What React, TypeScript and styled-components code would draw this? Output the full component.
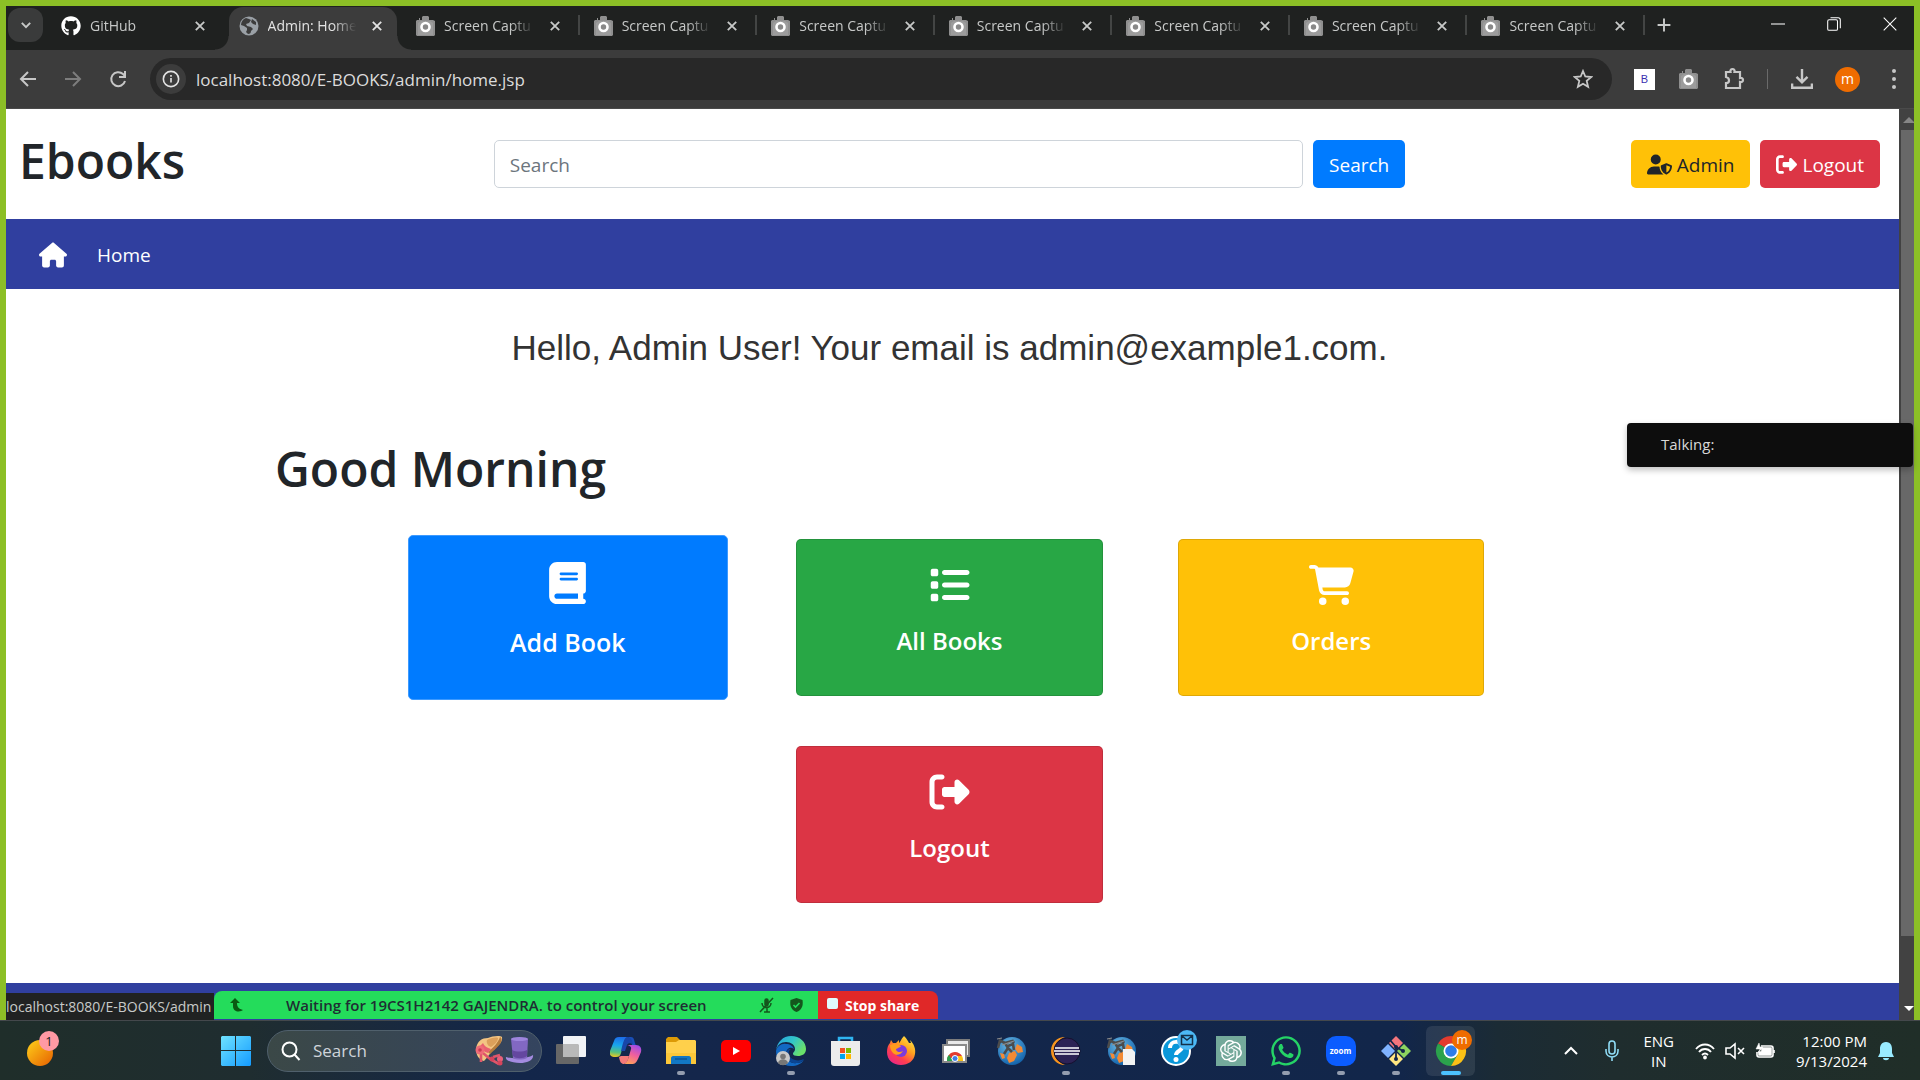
import React from 'react';
import styled, { createGlobalStyle, css } from 'styled-components';
import { FaGithub, FaWhatsapp } from 'react-icons/fa';
import {
  FaHouse, FaBook, FaList, FaCartShopping, FaRightFromBracket, FaUserShield,
} from 'react-icons/fa6';
import { SiOpenai } from 'react-icons/si';

const ui = `'Open Sans', 'Noto Sans', sans-serif`;

const Global = createGlobalStyle`
  *, *::before, *::after { box-sizing: border-box; }
  body { margin: 0; font-family: ${ui}; background: #fff; }
  button, input { font-family: inherit; }
  button { cursor: pointer; }
  svg { display: block; flex: none; }
`;

const Desktop = styled.div`
  min-height: 100vh;
  display: flex;
  flex-direction: column;
  overflow: hidden;
`;

const Browser = styled.div`
  position: relative;
  flex: 1;
  display: flex;
  flex-direction: column;
`;

const ShareFrame = styled.div`
  position: absolute;
  inset: 0;
  border: 6px solid #8cbf26;
  border-bottom: 0;
  pointer-events: none;
`;

/* ---------- tab strip ---------- */

const TabStrip = styled.div`
  height: 50px;
  padding: 6px 6px 0 8px;
  background: #1f2120;
  display: flex;
  color: #c7c9c8;
`;

const PlainButton = styled.button`
  border: 0;
  padding: 0;
  background: none;
  color: inherit;
  display: flex;
  align-items: center;
  justify-content: center;
`;

const TabSearch = styled(PlainButton)`
  width: 35px;
  height: 34px;
  margin: 2px 3px 0 0;
  border-radius: 12px;
  background: #3a3b3b;
`;

const Tabs = styled.div`
  flex: 1;
  display: grid;
  grid-template-columns: repeat(9, minmax(0, 1fr));
`;

const flare = css`
  content: '';
  position: absolute;
  bottom: 0;
  width: 14px;
  height: 14px;
`;

const Tab = styled.div<{ $active?: boolean; $divider?: boolean }>`
  position: relative;
  margin: 1px 4px 0 5px;
  padding: 0 10px 6px;
  display: flex;
  align-items: center;
  gap: 9px;
  border-radius: 14px 14px 0 0;
  background: ${(p) => (p.$active ? '#3c3c3c' : 'transparent')};
  color: ${(p) => (p.$active ? '#e3e3e3' : '#c7c9c8')};
  ${(p) => p.$active && css`
    &::before {
      ${flare}
      left: -14px;
      background: radial-gradient(circle at 0 0, transparent 13px, #3c3c3c 14px);
    }
    &::after {
      ${flare}
      right: -14px;
      background: radial-gradient(circle at 100% 0, transparent 13px, #3c3c3c 14px);
    }
  `}
  ${(p) => p.$divider && css`
    &::after {
      content: '';
      position: absolute;
      right: -5px;
      top: 8px;
      width: 2px;
      height: 20px;
      background: #434544;
    }
  `}
`;

const TabTitle = styled(PlainButton)`
  flex: 1;
  min-width: 0;
  white-space: nowrap;
  justify-content: flex-start;
  font-size: 14px;
  line-height: 20px;
  mask-image: linear-gradient(90deg, #000 72%, transparent 98%);
`;

const TabClose = styled(PlainButton)`
  width: 20px;
  height: 20px;
`;

const NewTab = styled(PlainButton)`
  width: 40px;
  height: 38px;
`;

const WindowControls = styled.div`
  width: 230px;
  padding-left: 66px;
  display: flex;
  color: #fff;
  button { flex: none; width: 56px; height: 36px; }
`;

/* ---------- toolbar ---------- */

const Toolbar = styled.div`
  height: 59px;
  padding: 0 15px 0 16px;
  background: #3c3c3c;
  border-bottom: 1px solid #4a4a4a;
  display: flex;
  align-items: center;
  color: #c7c7c7;
`;

const NavButtons = styled.div`
  display: flex;
  gap: 22px;
  margin-right: 21px;
`;

const ToolButton = styled(PlainButton)<{ $dim?: boolean }>`
  width: 23px;
  height: 24px;
  color: ${(p) => (p.$dim ? '#7d7d7d' : '#c7c7c7')};
`;

const Omnibox = styled.div`
  flex: 1;
  height: 42px;
  padding: 0 18px 0 6px;
  border-radius: 21px;
  background: #282828;
  display: flex;
  align-items: center;
  gap: 10px;
`;

const SiteInfo = styled(PlainButton)`
  width: 30px;
  height: 30px;
  border-radius: 50%;
  background: #3c3c3c;
  color: #e3e3e3;
`;

const Address = styled.input`
  flex: 1;
  min-width: 0;
  border: 0;
  padding: 1px 0 0;
  outline: 0;
  background: none;
  color: #dcdcdc;
  font-size: 17px;
  line-height: 24px;
`;

const Extensions = styled.div`
  display: flex;
  align-items: center;
  gap: 22px;
  margin-left: 22px;
`;

const ExtBadge = styled(PlainButton)`
  width: 21px;
  height: 21px;
  background: #fff;
  color: #3a2fb0;
  font: 11px/20px 'Liberation Sans', sans-serif;
`;

const ToolDivider = styled.div`
  width: 1px;
  height: 20px;
  background: #6a6a6a;
`;

const Avatar = styled(PlainButton)`
  width: 25px;
  height: 25px;
  border-radius: 50%;
  background: #ef6c00;
  color: #fff;
  font-size: 14px;
  line-height: 16px;
`;

/* ---------- page ---------- */

const Viewport = styled.div`
  flex: 1;
  display: flex;
  padding-right: 6px;
`;

const Page = styled.div`
  flex: 1;
  min-width: 0;
  display: flex;
  flex-direction: column;
  background: #fff;
  color: #212529;
`;

const Header = styled.header`
  height: 110px;
  display: grid;
  grid-template-columns: 1fr 2fr 1fr;
  > * { padding: 0 19px; }
`;

const Brand = styled.h1`
  margin: 0;
  padding-top: 22px;
  font-size: 48px;
  line-height: 60px;
  font-weight: 600;
`;

const SearchForm = styled.form`
  display: flex;
  align-items: center;
  gap: 10px;
`;

const SearchInput = styled.input`
  flex: 1;
  min-width: 0;
  height: 48px;
  padding: 2px 15px 0;
  border: 1px solid #ced4da;
  border-radius: 5px;
  color: #495057;
  font-size: 19px;
  line-height: 30px;
  &::placeholder { color: #6c757d; opacity: 1; }
`;

const tones = {
  primary: ['#007bff', '#fff'],
  warning: ['#ffc107', '#212529'],
  danger: ['#dc3545', '#fff'],
};

const buttonLook = css<{ $tone: keyof typeof tones }>`
  height: 48px;
  padding: 1px 16px 0;
  border: 0;
  border-radius: 5px;
  display: flex;
  align-items: center;
  gap: 5px;
  text-decoration: none;
  font-size: 19px;
  line-height: 30px;
  background: ${(p) => tones[p.$tone][0]};
  color: ${(p) => tones[p.$tone][1]};
`;

const Button = styled.button`${buttonLook}`;
const ButtonLink = styled.a`${buttonLook}`;

const Account = styled.div`
  display: flex;
  align-items: center;
  justify-content: flex-end;
  gap: 10px;
`;

const Nav = styled.nav`
  height: 70px;
  padding: 2px 0 0 39px;
  background: #303f9f;
  display: flex;
  align-items: center;
  gap: 30px;
  a { color: #fff; font-size: 19px; line-height: 30px; text-decoration: none; }
`;

const Main = styled.main`
  flex: 1;
`;

const Hello = styled.p`
  margin: 0;
  padding-top: 38px;
  text-align: center;
  font: 35px/42px 'Liberation Sans', Arial, sans-serif;
  color: #333;
`;

const Container = styled.section`
  max-width: 1425px;
  margin: 70px auto 0;
  padding: 0 38px;
`;

const Greeting = styled.h2`
  margin: 0;
  font-size: 48px;
  line-height: 60px;
  font-weight: 600;
`;

const Cards = styled.div`
  max-width: 1070px;
  margin: 40px auto 80px;
  display: grid;
  grid-template-columns: repeat(3, 1fr);
  gap: 50px 75px;
`;

const Card = styled.a<{ $color: string; $raised?: boolean; $center?: boolean }>`
  height: 157px;
  padding-top: 25px;
  border: 1px solid rgba(0, 0, 0, 0.125);
  border-radius: 5px;
  background: ${(p) => p.$color};
  background-clip: border-box;
  color: #fff;
  text-decoration: none;
  display: flex;
  flex-direction: column;
  align-items: center;
  gap: 21px;
  font-size: 24px;
  line-height: 30px;
  font-weight: 600;
  grid-column: ${(p) => (p.$center ? 2 : 'auto')};
  svg { width: 45px; height: 40px; }
  ${(p) => p.$raised && css`
    height: 165px;
    margin: -4px -7px;
    padding-top: 26px;
    border-color: #3d9aff;
    font-size: 25px;
    gap: 23px;
    svg { height: 42px; }
  `}
`;

const Footer = styled.footer`
  height: 37px;
  background: #303f9f;
`;

const Scrollbar = styled.div`
  width: 15px;
  background: #424242;
  display: flex;
  flex-direction: column;
  align-items: flex-end;
  justify-content: space-between;
  padding-bottom: 6px;
  overflow: hidden;
`;

const Thumb = styled.div`
  width: 13px;
  flex: 1;
  margin-bottom: 68px;
  background: #686868;
`;

/* ---------- floating windows ---------- */

const StatusBubble = styled.div`
  position: absolute;
  left: 6px;
  bottom: 0;
  width: 208px;
  height: 27px;
  background: #202222;
  color: #c8cac9;
  font-size: 14px;
  line-height: 28px;
  white-space: nowrap;
`;

const ShareBar = styled.div`
  position: absolute;
  left: 214px;
  bottom: 1px;
  width: 724px;
  height: 28px;
  display: flex;
  border-radius: 8px 8px 0 0;
  overflow: hidden;
  font-size: 15px;
  line-height: 28px;
  font-weight: 600;
`;

const ShareStatus = styled.div`
  flex: 1;
  display: flex;
  align-items: center;
  padding: 0 14px 0 16px;
  background: #24dc5b;
  color: #1f2d33;
  span { flex: 1; padding-left: 43px; white-space: nowrap; }
`;

const ShareIcons = styled.div`
  display: flex;
  gap: 14px;
`;

const StopShare = styled(PlainButton)`
  width: 120px;
  padding-left: 9px;
  justify-content: flex-start;
  gap: 7px;
  background: #e02828;
  color: #fff;
  font-size: 14px;
  font-weight: 700;
`;

const StopSquare = styled.i`
  width: 11px;
  height: 11px;
  margin-bottom: 4px;
  border-radius: 2px;
  background: #dffcff;
`;

const Toast = styled.div`
  position: absolute;
  right: 7px;
  top: 423px;
  width: 286px;
  height: 44px;
  padding-left: 34px;
  border-radius: 4px;
  background: #0d0d0d;
  box-shadow: 0 3px 6px rgba(0, 0, 0, 0.25);
  color: #d8d8d8;
  font-size: 15px;
  line-height: 43px;
`;

/* ---------- taskbar ---------- */

const Taskbar = styled.div`
  height: 60px;
  border-top: 1px solid #44484c;
  background: linear-gradient(90deg, #1f2e2a 0, #1f2d30 13%, #1c2b38 17%, #13264a 27%, #14264b 35%, #12264a 73%, #1b2b35 78%, #1f2d2e 84%, #202e28 100%);
  display: flex;
  align-items: center;
  color: #fff;
`;

const Widgets = styled(PlainButton)`
  width: 208px;
  height: 60px;
  padding: 0 0 4px 25px;
  justify-content: flex-start;
`;

const TaskSearch = styled.label`
  width: 275px;
  height: 42px;
  margin: 0 1px 0 4px;
  padding: 0 7px 0 13px;
  border: 1px solid #50606c;
  border-radius: 21px;
  background: linear-gradient(90deg, #3b4847, #34445f);
  display: flex;
  align-items: center;
  gap: 12px;
  input {
    flex: 1;
    min-width: 0;
    border: 0;
    padding: 0;
    background: none;
    color: #fff;
    font-size: 17px;
    line-height: 24px;
    &::placeholder { color: #cfd4da; opacity: 1; }
  }
`;

const Apps = styled.div`
  display: flex;
  align-items: center;
`;

const AppButton = styled(PlainButton)<{ $state?: 'running' | 'active' }>`
  position: relative;
  width: 55px;
  height: 50px;
  &::before {
    content: '';
    position: absolute;
    inset: 0 3px;
    border-radius: 6px;
    background: ${(p) => (p.$state === 'active' ? 'rgba(255,255,255,.09)' : 'none')};
  }
  &::after {
    content: '';
    position: absolute;
    bottom: 1px;
    width: ${(p) => (p.$state === 'active' ? '20px' : p.$state ? '8px' : '0')};
    height: 4px;
    border-radius: 2px;
    background: ${(p) => (p.$state === 'active' ? '#4cc2ff' : '#949daf')};
  }
  svg { position: relative; }
`;

const Tray = styled.div`
  margin-left: auto;
  padding-right: 24px;
  display: flex;
  align-items: center;
  gap: 21px;
`;

const TrayButton = styled(PlainButton)<{ $gap?: number; $align?: string }>`
  gap: ${(p) => p.$gap ?? 0}px;
  font-size: 15px;
  line-height: 20px;
  text-align: ${(p) => p.$align ?? 'center'};
`;

/* ---------- small icons ---------- */

type LineProps = { size?: number; w?: number; children: React.ReactNode };
const Line = ({ size = 20, w = 2, children }: LineProps) => (
  <svg width={size} height={size} viewBox="0 0 20 20" fill="none" stroke="currentColor" strokeWidth={w}>
    {children}
  </svg>
);

const Cross = () => <Line size={14} w={2}><path d="M4 4l12 12M16 4L4 16" strokeWidth="2.6" /></Line>;

const Camera = () => (
  <svg width="19" height="22" viewBox="0 0 19 22">
    <path d="M1 5h2V3h1v2h2V2l1-1h5l1 1v3h4l2 1v14l-1 1H1l-1-1V6z" fill="#8f8f8f" />
    <path d="M2 20V8l3-2h9l3 2v12z" fill="#9c9c9c" />
    <circle cx="9.500" cy="12" r="4" fill="#888" stroke="#fff" strokeWidth="2.600" />
  </svg>
);

const Globe = () => (
  <svg width="20" height="20" viewBox="0 0 20 20">
    <circle cx="10" cy="10" r="9.500" fill="#9aa0a6" />
    <path d="M7 2c-3 1-5 4-5 7l3 1 3 2v2l-1 2 2 2c2 0 3-1 3-3l2-2-2-2-4-1-1-2 3-1 2-3-2-1zM13 3l-1 3 2 2 3 1V6z" fill="#3c3c3c" />
  </svg>
);

const WeatherIcon = () => (
  <svg width="38" height="40" viewBox="0 0 38 40">
    <defs>
      <linearGradient id="sun" x1="0" y1="0" x2="1" y2="1">
        <stop offset="0" stopColor="#ffd21a" /><stop offset="1" stopColor="#e65f00" />
      </linearGradient>
    </defs>
    <circle cx="15" cy="24" r="13" fill="url(#sun)" />
    <circle cx="24" cy="12" r="10" fill="#ff99a4" />
    <text x="24" y="17" fontSize="13" fill="#222" textAnchor="middle">1</text>
  </svg>
);

const WindowsIcon = () => (
  <svg width="30" height="30" viewBox="0 0 30 30">
    <defs>
      <linearGradient id="win" x1="0" y1="0" x2="1" y2="1" gradientUnits="objectBoundingBox">
        <stop offset="0" stopColor="#6fe3ff" /><stop offset="1" stopColor="#149bff" />
      </linearGradient>
    </defs>
    <path d="M1 0h13v14H0V1zM15 0h14l1 1v13H15zM0 15h14v15H1l-1-1zM15 15h15v14l-1 1H15z" fill="url(#win)" />
  </svg>
);

const Hats = () => (
  <svg width="60" height="32" viewBox="0 0 60 32">
    <path d="M2 14C3 6 8 3 14 3c4-2 12-3 14-1 1 5-4 9-8 12-4 4-7 9-10 12-5-1-8-6-8-12z" fill="#f3c583" />
    <path d="M13 5c3-2 9-3 11-2 0 4-4 7-7 9-3-1-5-4-4-7z" fill="#dca05b" />
    <path d="M26 2c2 1 2 4 0 7-3 4-7 7-10 10l-2-2c5-4 10-9 12-15z" fill="#b57c3c" />
    <path d="M9 8c1 3 4 5 8 6l-3 4c-4-1-7-4-8-7z" fill="#e8606f" />
    <path d="M7 18l0 9M9 18l7 6 9 5M19 22l7-2" stroke="#e0566a" strokeWidth="2.600" fill="none" />
    <circle cx="6" cy="15" r="4.500" fill="#ef6b78" /><circle cx="6" cy="15" r="1.800" fill="#c93a52" />
    <circle cx="18" cy="24" r="2.500" fill="#d6455c" /><circle cx="26" cy="24" r="3" fill="#e8607a" /><circle cx="26" cy="28" r="2.500" fill="#d6455c" />
    <path d="M32 22c5 2 22 2 27-2 1 5-6 8-13 8s-15-2-14-6z" fill="#a48be0" />
    <path d="M37 4c5-2 12-2 17 0l-1 19c-4 2-11 2-14 0z" fill="#8268c2" />
    <path d="M38 15c4 2 11 2 15 0v6c-4 3-11 3-14 0z" fill="#6447a0" />
    <ellipse cx="45.500" cy="4" rx="8.500" ry="2" fill="#9d85dc" />
  </svg>
);

const Badge = ({ x, y, r, fill }: { x: number; y: number; r: number; fill: string }) => (
  <circle cx={x} cy={y} r={r} fill={fill} />
);

const TaskView = () => (
  <svg width="30" height="30" viewBox="0 0 30 30">
    <rect x="0" y="8" width="23" height="20" rx="1" fill="#676767" />
    <rect x="7" y="0" width="23" height="21" rx="1" fill="#f1f3f6" />
    <path d="M7 8h15l1 1v12H7z" fill="#b9b9b9" />
  </svg>
);

const Copilot = () => (
  <svg width="32" height="30" viewBox="0 0 32 30">
    <defs>
      <linearGradient id="cpA" x1=".3" y1="0" x2=".2" y2="1">
        <stop offset="0" stopColor="#1d6fe8" /><stop offset=".4" stopColor="#18a5ec" /><stop offset=".75" stopColor="#57c27d" /><stop offset="1" stopColor="#f2c81e" />
      </linearGradient>
      <linearGradient id="cpB" x1=".7" y1="0" x2=".3" y2="1">
        <stop offset="0" stopColor="#a04be8" /><stop offset=".5" stopColor="#f0609c" /><stop offset="1" stopColor="#ffa15b" />
      </linearGradient>
    </defs>
    <path d="M22 9c-1-5-2-8-6-8h5c3 0 3 3 4 6l1 3z" fill="#1a4fb8" />
    <path d="M9 1h9c-3 1-4 5-5 9l-2 7c-1 3-2 4-5 4H4c-3 0-5-2-4-6L4 5c1-3 2-4 5-4z" fill="url(#cpA)" />
    <path d="M16 9h10c4 0 6 3 5 7l-3 7c-2 4-3 5-6 5h-8c3-1 4-5 5-8l2-7c1-2-2-4-5-4z" fill="url(#cpB)" />
    <path d="M9 21c1 5 2 7 5 7 3-1 4-4 5-8h-8z" fill="#f57a7a" />
    <path d="M17 1c-3 1-4 6-6 14h4l2-6c1-2 3-2 6-1-1-4-2-7-6-7z" fill="#1846a8" />
  </svg>
);

const Explorer = () => (
  <svg width="30" height="28" viewBox="0 0 30 28">
    <path d="M0 2l2-2h9l4 4h-3v8H0z" fill="#dc9a06" />
    <path d="M0 5h10l3-2h16l1 1v23H0z" fill="#ffd04b" />
    <path d="M0 16h30v11H0z" fill="#f9bd27" opacity=".5" />
    <path d="M5 27v-6c0-1 1-2 2-2h16c1 0 2 1 2 2v6z" fill="#1277c4" />
    <path d="M9 22h12" stroke="#0b5698" strokeWidth="1.500" />
  </svg>
);

const YouTube = () => (
  <svg width="30" height="22" viewBox="0 0 30 22">
    <rect width="30" height="22" rx="5" fill="#f00" />
    <path d="M12 7l7 4-7 4z" fill="#fff" />
  </svg>
);

const Edge = () => (
  <svg width="30" height="30" viewBox="0 0 30 30">
    <defs>
      <linearGradient id="edT" x1="0" y1="0" x2="1" y2=".5">
        <stop offset="0" stopColor="#279fe0" /><stop offset=".55" stopColor="#32c6c9" /><stop offset="1" stopColor="#6ae06a" />
      </linearGradient>
    </defs>
    <path d="M0 15C1 6 7 0 15 0c9 0 15 6 15 13 0 5-4 7-8 7-3 0-5-1-5-2 0-2 2-2 2-5 0-4-4-7-9-7S1 9 0 15z" fill="url(#edT)" />
    <path d="M0 15c1-5 6-8 10-7 4 0 7 2 8 5-4-3-8 0-8 5 0 6 5 10 11 9 3 0 5-1 7-3-3 4-7 6-13 6C6 30 0 23 0 15z" fill="#1268c3" />
    <path d="M10 18c0 6 5 10 11 9 3 0 6-2 7-4-6 3-13 1-15-4-1-2 0-5 2-6-3 0-5 2-5 5z" fill="#0b4593" />
    <Badge x={7} y={22} r={7} fill="#c9c9c9" />
    <circle cx="7" cy="20.500" r="2.800" fill="#777" /><path d="M2 27c1-5 9-5 10 0-3 3-7 3-10 0z" fill="#777" />
  </svg>
);

const Store = () => (
  <svg width="30" height="30" viewBox="0 0 30 30">
    <path d="M8 6V2h13v4" stroke="#2fb4f0" strokeWidth="2.500" fill="none" />
    <path d="M0 5h29v22c0 2-1 3-3 3H3c-2 0-3-1-3-3z" fill="#ececec" />
    <path d="M9 12h5v5H9z" fill="#f25022" /><path d="M15 12h5v5h-5z" fill="#7fba00" />
    <path d="M9 18h5v5H9z" fill="#00a4ef" /><path d="M15 18h5v5h-5z" fill="#ffb900" />
  </svg>
);

const Firefox = () => (
  <svg width="30" height="30" viewBox="0 0 30 30">
    <defs>
      <linearGradient id="ff" x1=".9" y1="0" x2=".2" y2="1">
        <stop offset="0" stopColor="#fff14a" /><stop offset=".4" stopColor="#ffa01e" /><stop offset=".7" stopColor="#ff3f4e" /><stop offset="1" stopColor="#e8248c" />
      </linearGradient>
    </defs>
    <path d="M18 0c3 3 4 5 5 7l2 0-1-3c4 4 6 9 5 14-1 7-7 11-14 11C7 29 1 24 1 16c0-4 1-7 3-9l1-3 2 3h3l3-3 0 3c1 0 2-4 5-7z" fill="url(#ff)" />
    <circle cx="15" cy="15" r="6" fill="#7c3bdc" />
    <path d="M4 9c4-2 8-1 11 1-1 2-5 2-5 4 1 2 4 3 7 1-2 4-7 5-10 2-2-2-3-5-3-8z" fill="#ff9d1c" />
  </svg>
);

const RemoteDesktop = () => (
  <svg width="28" height="24" viewBox="0 0 28 24">
    <rect x="5" y="1" width="22" height="16" fill="#e9e9e9" stroke="#7c7c7c" strokeWidth="2" />
    <rect x="1" y="6" width="23" height="17" fill="#fff" stroke="#8a8a8a" strokeWidth="2" />
    <path d="M5 22c0-5 3-9 8-9 3 0 6 2 7 4h-7z" fill="#e33b2e" />
    <path d="M5 22c0-3 0-4 2-6l4 6z" fill="#2ba24c" /><path d="M20 17c1 2 1 3 1 5h-5l-1-5z" fill="#fbc116" />
    <circle cx="13" cy="19.500" r="3" fill="#3f7de8" stroke="#fff" />
  </svg>
);

const World = ({ page }: { page?: boolean }) => (
  <svg width="30" height="30" viewBox="0 0 30 30">
    <defs>
      <radialGradient id="sea" cx=".4" cy=".3" r=".7">
        <stop offset="0" stopColor="#6bb9e6" /><stop offset="1" stopColor="#1565ac" />
      </radialGradient>
    </defs>
    <circle cx="16" cy="15" r="14" fill="url(#sea)" />
    <path d="M13 17l6-2 2 4-3 6-5 2-2-5zM21 8l5 3 1 5-5 1-3-4zM4 17l4 1 1 4-3 1z" fill="#f28a35" />
    <path d="M2 12l2-8M3 4l6 3 7-2M9 7l3 5-4 6M12 10l5-2 1 6M11 11l5 5M16 4l2 3" stroke="#4c4c4c" strokeWidth="2.600" fill="none" />
    <path d="M1 3l5-1M6 9l12-4" stroke="#8d8d8d" strokeWidth="1.200" />
    {page && <path d="M17 13h9l3 3v13H17z" fill="#f3f3f3" />}
  </svg>
);

const Eclipse = () => (
  <svg width="30" height="28" viewBox="0 0 30 28">
    <path d="M14 0C6 0 0 6 0 14s6 14 14 14C8 26 4 20 4 14S8 2 14 0z" fill="#f7941e" />
    <circle cx="16" cy="14" r="13" fill="#2c2255" stroke="#15102e" />
    <path d="M4 11h24M3 14h26M4 17h24" stroke="#fff" strokeWidth="1.700" />
  </svg>
);

const Help = () => (
  <svg width="42" height="42" viewBox="0 0 42 42">
    <circle cx="21" cy="21" r="14" fill="#0a97d9" stroke="#fff" strokeWidth="2" />
    <path d="M15 18c0-8 12-8 12-1 0 4-6 4-6 8" stroke="#fff" strokeWidth="4" fill="none" />
    <circle cx="21" cy="29.500" r="2.500" fill="#fff" />
    <Badge x={32} y={10} r={10} fill="#4cb8f5" />
    <path d="M26.500 5.500h11v9h-11zM27 6l5 4 5-4" stroke="#14304a" strokeWidth="1.500" fill="none" />
  </svg>
);

const OpenAiTile = styled.span`
  width: 30px;
  height: 30px;
  background: #74a99b;
  display: grid;
  place-items: center;
`;

const ZoomTile = styled.span`
  width: 30px;
  height: 30px;
  border-radius: 10px;
  background: #0b5cff;
  display: grid;
  place-items: center;
  font-size: 8px;
  line-height: 10px;
  font-weight: 700;
  color: #fff;
`;

const Git = () => (
  <svg width="30" height="30" viewBox="0 0 30 30">
    <path d="M15 0l7 7-7 7-7-7z" fill="#f4757c" /><path d="M7 8l7 7-7 7-7-7z" fill="#80b3ff" />
    <path d="M23 8l7 7-7 7-7-7z" fill="#8dd35f" /><path d="M15 16l7 7-7 7-7-7z" fill="#ffe680" />
    <path d="M9 4l6 7v12M15 11l7 4" stroke="#13264a" strokeWidth="1.800" fill="none" />
    <circle cx="15" cy="11" r="2" fill="#13264a" /><circle cx="22" cy="15" r="2" fill="#13264a" /><circle cx="15" cy="23" r="2" fill="#13264a" />
  </svg>
);

const Chrome = () => (
  <svg width="42" height="42" viewBox="0 0 42 42">
    <path d="M21 21L8 13.500A15 15 0 0 1 34 13.500H21z" fill="#e33b2e" />
    <path d="M21 21L8 13.500A15 15 0 0 0 21 36l6.500-11.300z" fill="#2ba24c" />
    <path d="M21 13.500h13A15 15 0 0 1 21 36l6.500-11.300z" fill="#fbc116" />
    <circle cx="21" cy="21" r="7.500" fill="#fff" /><circle cx="21" cy="21" r="5.800" fill="#2e7de9" />
    <Badge x={32} y={10} r={10} fill="#ef6c00" />
    <text x="32" y="14" fontSize="12" fill="#fff" textAnchor="middle">m</text>
  </svg>
);

const apps: { name: string; icon: React.ReactNode; state?: 'running' | 'active' }[] = [
  { name: 'Task view', icon: <TaskView /> },
  { name: 'Copilot', icon: <Copilot /> },
  { name: 'File Explorer', icon: <Explorer />, state: 'running' },
  { name: 'YouTube', icon: <YouTube /> },
  { name: 'Edge', icon: <Edge />, state: 'running' },
  { name: 'Store', icon: <Store /> },
  { name: 'Firefox', icon: <Firefox /> },
  { name: 'Remote Desktop', icon: <RemoteDesktop /> },
  { name: 'World', icon: <World /> },
  { name: 'Eclipse', icon: <Eclipse />, state: 'running' },
  { name: 'World document', icon: <World page /> },
  { name: 'Get Help', icon: <Help /> },
  { name: 'ChatGPT', icon: <OpenAiTile><SiOpenai size={22} /></OpenAiTile> },
  { name: 'WhatsApp', icon: <FaWhatsapp size={34} color="#25d366" />, state: 'running' },
  { name: 'Zoom', icon: <ZoomTile>zoom</ZoomTile>, state: 'running' },
  { name: 'Git', icon: <Git />, state: 'running' },
  { name: 'Chrome', icon: <Chrome />, state: 'active' },
];

const tabs = [
  { title: 'GitHub', icon: <FaGithub size={20} color="#fff" /> },
  { title: 'Admin: Home', icon: <Globe />, active: true },
  ...Array.from({ length: 7 }, () => ({ title: 'Screen Captu', icon: <Camera />, divider: true, active: false })),
];

export default function App() {
  return (
    <Desktop>
      <Global />
      <Browser>
        <TabStrip>
          <TabSearch aria-label="Search tabs"><Line size={14}><path d="M4 7l6 6 6-6" strokeWidth="2.800" /></Line></TabSearch>
          <Tabs>
            {tabs.map((t, i) => (
              <Tab key={i} $active={t.active} $divider={'divider' in t}>
                {t.icon}
                <TabTitle>{t.title}</TabTitle>
                <TabClose aria-label="Close tab"><Cross /></TabClose>
              </Tab>
            ))}
          </Tabs>
          <NewTab aria-label="New tab"><Line size={16}><path d="M10 2v16M2 10h16" strokeWidth="2.400" /></Line></NewTab>
          <WindowControls>
            <PlainButton aria-label="Minimize"><Line size={14} w={1.5}><path d="M0 10h20" /></Line></PlainButton>
            <PlainButton aria-label="Restore"><Line size={14} w={1.5}><rect x="1" y="4" width="14" height="15" rx="2" /><path d="M5 1h11q3 0 3 3v12" /></Line></PlainButton>
            <PlainButton aria-label="Close"><Line size={14} w={1.5}><path d="M1 1l18 18M19 1L1 19" /></Line></PlainButton>
          </WindowControls>
        </TabStrip>

        <Toolbar>
          <NavButtons>
            <ToolButton aria-label="Back"><Line><path d="M18 10H3M10 3l-7 7 7 7" /></Line></ToolButton>
            <ToolButton aria-label="Forward" $dim><Line><path d="M2 10h15M10 3l7 7-7 7" /></Line></ToolButton>
            <ToolButton aria-label="Reload"><Line><path d="M17 12a7 7 0 1 1-2-7l2 2M17 2v6h-6" /></Line></ToolButton>
          </NavButtons>
          <Omnibox>
            <SiteInfo aria-label="Site information">
              <Line size={18} w={1.8}><circle cx="10" cy="10" r="8.500" /><path d="M10 9v5M10 5.500v2" /></Line>
            </SiteInfo>
            <Address aria-label="Address" defaultValue="localhost:8080/E-BOOKS/admin/home.jsp" />
            <ToolButton aria-label="Bookmark">
              <Line w={1.8}><path d="M10 2l2.300 5.500 6 .5-4.600 3.900 1.400 5.900L10 14.700l-5.100 3.100 1.400-5.900L1.700 8l6-.5z" /></Line>
            </ToolButton>
          </Omnibox>
          <Extensions>
            <ExtBadge aria-label="B extension">B</ExtBadge>
            <ToolButton aria-label="Screen capture"><Camera /></ToolButton>
            <ToolButton aria-label="Extensions">
              <svg width="22" height="24" viewBox="0 0 22 24" fill="none" stroke="currentColor" strokeWidth="2.200">
                <path d="M3 5h4.500c-1-4 5-4 4 0H17v6c4-1 4 5 0 4v6H3v-5c4 0 4-5 0-6z" />
              </svg>
            </ToolButton>
            <ToolDivider />
            <ToolButton aria-label="Downloads">
              <Line size={22} w={2.2}><path d="M10 1v11M5 8l5 5 5-5M1 14v4h18v-4" /></Line>
            </ToolButton>
            <Avatar aria-label="Profile">m</Avatar>
            <ToolButton aria-label="Menu">
              <svg width="4" height="22" viewBox="0 0 4 22" fill="currentColor"><circle cx="2" cy="3" r="2" /><circle cx="2" cy="11" r="2" /><circle cx="2" cy="19" r="2" /></svg>
            </ToolButton>
          </Extensions>
        </Toolbar>

        <Viewport>
          <Page>
            <Header>
              <Brand>Ebooks</Brand>
              <SearchForm onSubmit={(e) => e.preventDefault()}>
                <SearchInput type="search" placeholder="Search" aria-label="Search" />
                <Button $tone="primary" type="submit">Search</Button>
              </SearchForm>
              <Account>
                <ButtonLink $tone="warning" href="#admin"><FaUserShield size={25} />Admin</ButtonLink>
                <ButtonLink $tone="danger" href="#logout"><FaRightFromBracket size={21} />Logout</ButtonLink>
              </Account>
            </Header>
            <Nav>
              <FaHouse size={28} color="#fff" />
              <a href="#home">Home</a>
            </Nav>
            <Main>
              <Hello>Hello, Admin User! Your email is admin@example1.com.</Hello>
              <Container>
                <Greeting>Good Morning</Greeting>
                <Cards>
                  <Card href="#add" $color="#007bff" $raised><FaBook />Add Book</Card>
                  <Card href="#all" $color="#28a745"><FaList />All Books</Card>
                  <Card href="#orders" $color="#ffc107"><FaCartShopping />Orders</Card>
                  <Card href="#logout" $color="#dc3545" $center><FaRightFromBracket />Logout</Card>
                </Cards>
              </Container>
            </Main>
            <Footer />
          </Page>
          <Scrollbar>
            <svg width="12" height="21" viewBox="0 0 12 21"><path d="M1 14l6-6 6 6z" fill="#868686" /></svg>
            <Thumb />
            <svg width="12" height="10" viewBox="0 0 12 10"><path d="M2 2h10L7 7z" fill="#fff" /></svg>
          </Scrollbar>
        </Viewport>

        <ShareFrame />
        <Toast>Talking:</Toast>
        <StatusBubble>localhost:8080/E-BOOKS/admin</StatusBubble>
        <ShareBar>
          <ShareStatus>
            <svg width="13" height="14" viewBox="0 0 13 14"><path d="M5 0l5 5H7c0 4 2 6 6 7-2 2-10 3-10-4V5H0z" fill="#0a5a12" /></svg>
            <span>Waiting for 19CS1H2142 GAJENDRA. to control your screen</span>
            <ShareIcons>
              <svg width="16" height="16" viewBox="0 0 16 16" fill="none" stroke="#14561c" strokeWidth="1.500">
                <path d="M3 6c0 6 9 6 9 0M8 11v4M5 15h6M1 15L14 1" /><rect x="6" y="2" width="3" height="7" rx="1.500" fill="#14561c" />
              </svg>
              <svg width="15" height="16" viewBox="0 0 15 16">
                <path d="M7.500 1l6 2c1 6-1 10-6 12-5-2-7-6-6-12z" fill="#14561c" /><path d="M4.500 8l2 2 4-4" stroke="#24dc5b" strokeWidth="1.600" fill="none" />
              </svg>
            </ShareIcons>
          </ShareStatus>
          <StopShare><StopSquare />Stop share</StopShare>
        </ShareBar>
      </Browser>

      <Taskbar>
        <Widgets aria-label="Widgets"><WeatherIcon /></Widgets>
        <AppButton aria-label="Start"><WindowsIcon /></AppButton>
        <TaskSearch>
          <Line><circle cx="8.500" cy="8.500" r="7" /><path d="M13.500 13.500l5 5.500" /></Line>
          <input type="text" placeholder="Search" aria-label="Search the computer" />
          <Hats />
        </TaskSearch>
        <Apps>
          {apps.map((a) => (
            <AppButton key={a.name} aria-label={a.name} $state={a.state}>{a.icon}</AppButton>
          ))}
        </Apps>
        <Tray>
          <TrayButton aria-label="Show hidden icons"><Line><path d="M4 13l6-6 6 6" /></Line></TrayButton>
          <TrayButton aria-label="Microphone">
            <svg width="20" height="22" viewBox="0 0 20 22" fill="none" stroke="#8fdcf5" strokeWidth="1.600">
              <rect x="7" y="1" width="6" height="13" rx="3" /><path d="M4 9v2c0 8 12 8 12 0V9M10 17v4" />
            </svg>
          </TrayButton>
          <TrayButton>ENG<br />IN</TrayButton>
          <TrayButton $gap={10} aria-label="Network, sound and battery">
            <Line w={1.8}><path d="M1 8c5-6 13-6 18 0M4 11c3-4 9-4 12 0M7 14c2-2 4-2 6 0" /><circle cx="10" cy="16.500" r="1" /></Line>
            <Line w={1.6}><path d="M1 7h4l5-4v14l-5-4H1zM13 7l6 6M19 7l-6 6" /></Line>
            <Line w={1.6}><path d="M6 5h10q2 0 2 2v7q0 2-2 2H4q-2 0-2-2v-3" /><path d="M7 7h9v7H4v-3h3zM19 9v3" fill="currentColor" /><path d="M4 2L1 8h4l-2 4 5-6H5z" fill="currentColor" strokeWidth=".5" /></Line>
          </TrayButton>
          <TrayButton $gap={9} $align="right" aria-label="Clock and notifications">
            <span>12:00 PM<br />9/13/2024</span>
            <svg width="20" height="20" viewBox="0 0 20 20" fill="#99ebff"><path d="M10 1c5 0 6 4 6 7v4l2 4H2l2-4V8c0-3 1-7 6-7zM7 17h6c0 3-6 3-6 0z" /></svg>
          </TrayButton>
        </Tray>
      </Taskbar>
    </Desktop>
  );
}
